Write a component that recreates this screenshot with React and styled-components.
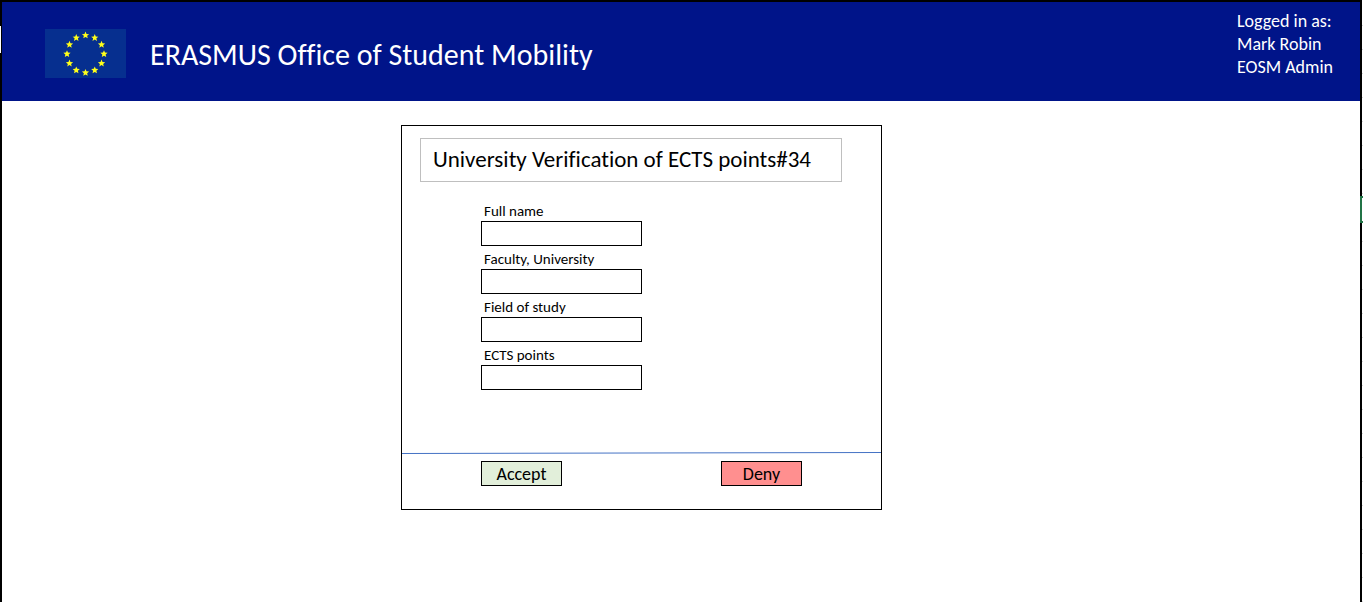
import React from 'react';
import styled, { createGlobalStyle } from 'styled-components';

const GlobalStyle = createGlobalStyle`
  * { box-sizing: border-box; }
  body {
    margin: 0;
    background: #fff;
    color: #000;
    font-family: Carlito, Lato, "Liberation Sans", sans-serif;
    font-variant-ligatures: none;
  }
`;

const Sheet = styled.div`
  position: relative;
  min-height: 100vh;
  padding-right: 1px;
  display: flex;
  background: repeating-linear-gradient(#fff 0 23px, #d6d6d6 23px 24px) 0 2px;
`;

const Frame = styled.div`
  flex: 1;
  border: 2px solid #000;
  border-bottom: 0;
  background: #fff;
`;

const RowNotch = styled.span`
  position: absolute;
  left: 0;
  top: 26px;
  width: 1px;
  height: 27px;
  background: #fff;
`;

const CellMarker = styled.span`
  position: absolute;
  right: 0;
  top: 196px;
  width: 3px;
  height: 27px;
  border: 2px solid #217346;
  border-right: 0;
  background: #fff;
`;

const Header = styled.header`
  display: flex;
  align-items: center;
  min-height: 99px;
  padding: 0 25px 0 43px;
  background: #001489;
  color: #fff;
`;

const Flag = styled.svg`
  flex: none;
  display: block;
  width: 81px;
  height: 49px;
  margin-top: 4px;
`;

const SiteTitle = styled.h1`
  flex: 1;
  margin: 6px 0 0 24px;
  font-size: 30px;
  line-height: 36px;
  font-weight: 400;
`;

const Account = styled.div`
  align-self: flex-start;
  min-width: 98px;
  padding-top: 8px;
  font-size: 18px;
  line-height: 23px;
`;

const AccountLine = styled.div``;

const Panel = styled.form`
  width: 481px;
  max-width: 100%;
  margin: 24px 0 24px 399px;
  border: 1px solid #000;
`;

const PanelTitle = styled.h2`
  width: 422px;
  margin: 12px 18px 16px;
  padding: 3px 12px 5px;
  border: 1px solid #bfbfbf;
  font-size: 23px;
  line-height: 34px;
  font-weight: 400;
`;

const Fields = styled.div`
  display: grid;
  width: 161px;
  margin-left: 79px;
`;

const Label = styled.label`
  padding: 3px 3px 0;
  font-size: 15px;
  line-height: 20px;
`;

const Input = styled.input`
  width: 100%;
  height: 25px;
  padding: 0 4px;
  border: 1px solid #000;
  border-radius: 0;
  background: #fff;
  font: inherit;
  font-size: 15px;
`;

const Divider = styled.svg`
  display: block;
  width: 100%;
  height: 2px;
  margin-top: 62px;
`;

const Actions = styled.div`
  display: flex;
  justify-content: space-between;
  padding: 7px 79px 23px;
`;

const ActionButton = styled.button`
  width: 81px;
  height: 25px;
  padding: 2px 0 0;
  border: 1px solid #000;
  border-radius: 0;
  background: ${({ $tone }) => ($tone === 'deny' ? '#ff8f8f' : '#e2efda')};
  color: #000;
  font-family: inherit;
  font-size: 18px;
  line-height: 21px;
`;

const starPoints = (cx, cy, outer) =>
  Array.from({ length: 10 }, (_, i) => {
    const r = i % 2 ? outer * 0.45 : outer;
    const a = (Math.PI / 5) * i - Math.PI / 2;
    return `${(cx + r * Math.cos(a)).toFixed(2)},${(cy + r * Math.sin(a)).toFixed(2)}`;
  }).join(' ');

const stars = Array.from({ length: 12 }, (_, i) => {
  const a = (Math.PI / 6) * i;
  return starPoints(40.5 + 18.5 * Math.sin(a), 25 - 18.7 * Math.cos(a), 3.8);
});

const fields = [
  { id: 'full-name', label: 'Full name' },
  { id: 'faculty', label: 'Faculty, University' },
  { id: 'field-of-study', label: 'Field of study' },
  { id: 'ects-points', label: 'ECTS points' },
];

export default function App() {
  return (
    <>
      <GlobalStyle />
      <Sheet>
        <Frame>
          <Header>
            <Flag viewBox="0 0 81 49" role="img" aria-label="European Union">
              <rect width="81" height="49" fill="#062f8f" />
              {stars.map((points) => (
                <polygon key={points} points={points} fill="#ffff1a" />
              ))}
            </Flag>
            <SiteTitle>ERASMUS Office of Student Mobility</SiteTitle>
            <Account>
              <AccountLine>Logged in as:</AccountLine>
              <AccountLine>Mark Robin</AccountLine>
              <AccountLine>EOSM Admin</AccountLine>
            </Account>
          </Header>
          <main>
            <Panel onSubmit={(e) => e.preventDefault()}>
              <PanelTitle>University Verification of ECTS points#34</PanelTitle>
              <Fields>
                {fields.map(({ id, label }) => (
                  <React.Fragment key={id}>
                    <Label htmlFor={id}>{label}</Label>
                    <Input id={id} type="text" />
                  </React.Fragment>
                ))}
              </Fields>
              <Divider viewBox="0 0 479 2" preserveAspectRatio="none" aria-hidden="true">
                <line x1="0" y1="1.5" x2="479" y2="0.5" stroke="#4472c4" strokeWidth="1" />
              </Divider>
              <Actions>
                <ActionButton type="submit">Accept</ActionButton>
                <ActionButton type="button" $tone="deny">Deny</ActionButton>
              </Actions>
            </Panel>
          </main>
        </Frame>
        <RowNotch />
        <CellMarker />
      </Sheet>
    </>
  );
}
